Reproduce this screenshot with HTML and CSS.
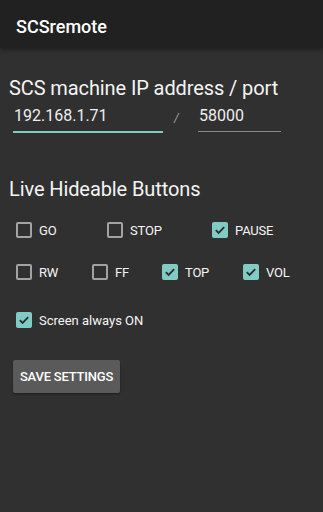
FILE: index.html
```html
<!DOCTYPE html>
<html>
<head>
<meta charset="utf-8">
<link rel="stylesheet" href="styles.css">
</head>
<body>
<header class="appbar">SCSremote</header>
<main class="content">
  <div class="section-title">SCS machine IP address / port</div>
  <div class="addr-row">
    <div class="field field-ip focused">192.168.1.71</div>
    <div class="slash">/</div>
    <div class="field field-port">58000</div>
  </div>

  <div class="section-title title-buttons">Live Hideable Buttons</div>

  <div class="cb-row row1">
    <label class="cb w-go"><span class="box"></span>GO</label>
    <label class="cb w-stop"><span class="box"></span>STOP</label>
    <label class="cb"><span class="box checked"><svg viewBox="0 0 16 16"><path d="M3.8 8.2 L6.6 11 L12.2 5.2"/></svg></span>PAUSE</label>
  </div>
  <div class="cb-row row2">
    <label class="cb w-rw"><span class="box"></span>RW</label>
    <label class="cb w-ff"><span class="box"></span>FF</label>
    <label class="cb w-top"><span class="box checked"><svg viewBox="0 0 16 16"><path d="M3.8 8.2 L6.6 11 L12.2 5.2"/></svg></span>TOP</label>
    <label class="cb"><span class="box checked"><svg viewBox="0 0 16 16"><path d="M3.8 8.2 L6.6 11 L12.2 5.2"/></svg></span>VOL</label>
  </div>
  <div class="cb-row row3">
    <label class="cb cb-mixed"><span class="box checked"><svg viewBox="0 0 16 16"><path d="M3.8 8.2 L6.6 11 L12.2 5.2"/></svg></span>Screen always ON</label>
  </div>

  <button class="save-btn">SAVE SETTINGS</button>
</main>
</body>
</html>
```

FILE: styles.css
```css
html, body {
  margin: 0;
  padding: 0;
  height: 100%;
}
body {
  background: #303030;
  color: #ffffff;
  font-family: Roboto, "Liberation Sans", sans-serif;
  overflow: hidden;
}
.appbar {
  position: relative;
  z-index: 1;
  box-sizing: border-box;
  height: 48px;
  padding: 6px 0 0 16px;
  line-height: 42px;
  font-size: 18px;
  font-weight: 500;
  background: #212121;
  box-shadow: 0 2px 4px rgba(0, 0, 0, 0.35);
}
.content {
  padding: 28px 0 0 0;
}
.section-title {
  margin-left: 9px;
  font-size: 20px;
  line-height: 24px;
  color: #f4f4f4;
  letter-spacing: -0.1px;
}
.addr-row {
  display: flex;
  align-items: flex-start;
  margin-top: 6px;
}
.field {
  box-sizing: border-box;
  font-size: 16px;
  line-height: 20px;
  padding: 0 0 5px 1px;
  color: #eeeeee;
  border-bottom: 1px solid #8a8a8a;
  height: 26px;
}
.field-ip {
  margin-left: 13px;
  width: 150px;
}
.field.focused {
  border-bottom: 2px solid #80cbc4;
  height: 27px;
}
.field-port {
  width: 83px;
}
.slash {
  width: 35px;
  padding-left: 11px;
  box-sizing: border-box;
  font-size: 12px;
  line-height: 20px;
  padding-top: 2px;
  color: #a0a0a0;
  font-style: italic;
}
.title-buttons {
  margin-top: 44px;
}
.cb-row {
  display: flex;
  align-items: center;
  height: 32px;
  padding-left: 16px;
}
.row1 { margin-top: 13px; }
.row2 { margin-top: 10px; }
.row3 { margin-top: 16px; }
.cb {
  display: flex;
  align-items: center;
  font-size: 13px;
  color: #f5f5f5;
  letter-spacing: -0.2px;
}
.cb-mixed {
  letter-spacing: 0;
}
.w-go { width: 91px; }
.w-stop { width: 105px; }
.w-rw { width: 76px; }
.w-ff { width: 70px; }
.w-top { width: 81px; }
.box {
  box-sizing: border-box;
  width: 16px;
  height: 16px;
  border: 2px solid #a3a3a3;
  border-radius: 2px;
  margin-right: 7px;
  flex: none;
  display: flex;
}
.box.checked {
  background: #80cbc4;
  border-color: #80cbc4;
}
.box svg {
  width: 16px;
  height: 16px;
  margin: -2px;
}
.box svg path {
  fill: none;
  stroke: #263030;
  stroke-width: 1.8;
}
.save-btn {
  display: block;
  margin: 24px 0 0 13px;
  width: 107px;
  height: 33px;
  padding: 0;
  border: none;
  border-radius: 2px;
  background: #5a5a5a;
  color: #ffffff;
  font-family: Roboto, "Liberation Sans", sans-serif;
  font-size: 13px;
  font-weight: 500;
  letter-spacing: -0.2px;
  box-shadow: 0 1px 2px rgba(0, 0, 0, 0.4);
}
```
